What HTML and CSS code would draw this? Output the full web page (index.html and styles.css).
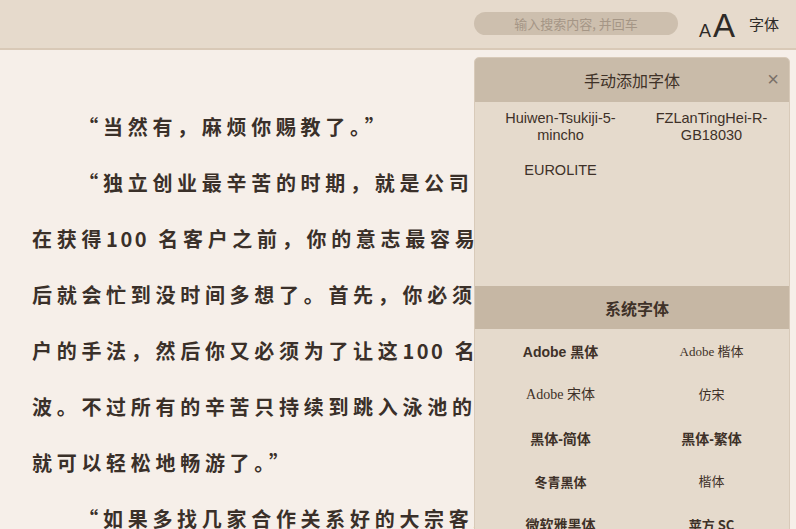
FILE: index.html
```html
<!DOCTYPE html>
<html lang="zh-CN">
<head>
  <meta charset="UTF-8">
  <meta name="viewport" content="width=device-width, initial-scale=1.0">
  <title>阅读</title>
  <link rel="stylesheet" href="styles.css">
</head>
<body>
  <!-- 顶部工具栏 -->
  <header class="toolbar">
    <input class="search" type="text" placeholder="输入搜索内容, 并回车">
    <div class="font-size"><span class="a-small">A</span><span class="a-big">A</span></div>
    <div class="font-btn">字体</div>
  </header>

  <!-- 正文 -->
  <main class="reader">
    <p>“当然有，麻烦你赐教了。”</p>
    <p>“独立创业最辛苦的时期，就是公司刚成立还没上轨道的阶段，在获得<span class="num">100</span> 名客户之前，你的意志最容易动摇。只要熬过这阶段，之后就会忙到没时间多想了。首先，你必须学会如何找到并说服大宗客户的手法，然后你又必须为了让这<span class="num">100</span> 名客户都满意而四处拼命地奔波。不过所有的辛苦只持续到跳入泳池的那一刻为止，在那之后，你就可以轻松地畅游了。”</p>
    <p>“如果多找几家合作关系好的大宗客户来往，是不是就会轻松一点？”</p>
  </main>

  <!-- 字体面板 -->
  <aside class="font-panel">
    <div class="panel-head">
      <span>手动添加字体</span>
      <span class="close">×</span>
    </div>
    <div class="custom-fonts">
      <div class="font-item">Huiwen-Tsukiji-5-mincho</div>
      <div class="font-item">FZLanTingHei-R-GB18030</div>
      <div class="font-item">EUROLITE</div>
    </div>
    <div class="section-head">系统字体</div>
    <div class="system-fonts">
      <div class="font-item f-bold">Adobe 黑体</div>
      <div class="font-item f-kai">Adobe 楷体</div>
      <div class="font-item f-song">Adobe 宋体</div>
      <div class="font-item f-kai">仿宋</div>
      <div class="font-item f-bold">黑体-简体</div>
      <div class="font-item f-bold">黑体-繁体</div>
      <div class="font-item f-mid">冬青黑体</div>
      <div class="font-item f-kai">楷体</div>
      <div class="font-item f-bold">微软雅黑体</div>
      <div class="font-item f-mid">苹方 SC</div>
    </div>
  </aside>
</body>
</html>
```

FILE: styles.css
```css
body {
  margin: 0;
  padding: 0;
  height: 529px;
  overflow: hidden;
  background-color: #F6EFE9; /* 正文米白底色 */
  color: #3A3029;
  font-family: "Noto Sans CJK SC", "Noto Sans", sans-serif;
  position: relative;
}

.toolbar {
  height: 48px;
  background-color: #E6DACC;
  border-bottom: 2px solid #D9C9B7;
  display: flex;
  align-items: center;
  justify-content: flex-end;
  padding-right: 17px;
}
.search {
  width: 204px;
  height: 23px;
  box-sizing: border-box;
  border: none;
  border-radius: 12px;
  background-color: #CDBFAE;
  font-family: "Noto Sans CJK SC", sans-serif;
  font-size: 13px;
  text-align: center;
  outline: none;
  margin-bottom: 1px;
}
.search::placeholder {
  color: #A59686;
}
.font-size {
  display: flex;
  align-items: baseline;
  margin-left: 21px;
  color: #2E2A27;
  font-family: "Liberation Sans", Arial, sans-serif;
  line-height: 1;
  margin-top: 2px;
}
.a-small {
  font-size: 18px;
}
.a-big {
  font-size: 33px;
  margin-left: 2px;
}
.font-btn {
  margin-left: 14px;
  font-size: 15px;
  color: #2E2A27;
  margin-bottom: 1px;
}

/* 正文 */
.reader {
  padding: 49px 0 0 32px;
  width: 748px;
  font-size: 20px;
  font-weight: 700;
  letter-spacing: 4.7px;
  line-height: 56px;
}
.reader p {
  margin: 0;
  text-indent: 46.3px;
}
.num {
  letter-spacing: 2.5px;
}

/* 字体面板 */
.font-panel {
  position: absolute;
  left: 474px;
  top: 57px;
  width: 316px;
  height: 490px;
  box-sizing: border-box;
  background-color: #E5DACC;
  border: 1px solid #D8CAB9;
  border-radius: 5px 5px 0 0;
  overflow: hidden;
}
.panel-head {
  height: 44px;
  background-color: #C9BBA9;
  display: flex;
  align-items: center;
  justify-content: center;
  position: relative;
  font-size: 16px;
  color: #3F3228;
}
.close {
  position: absolute;
  right: 10px;
  top: 11px;
  font-family: "Liberation Sans", Arial, sans-serif;
  font-size: 20px;
  line-height: 20px;
  color: #7A7068;
}
.custom-fonts {
  height: 184px;
  padding: 8px 8px 0 10px;
  box-sizing: border-box;
  display: grid;
  grid-template-columns: 151px 151px;
  grid-auto-rows: min-content;
  row-gap: 18px;
  font-family: "Liberation Sans", Arial, sans-serif;
  font-size: 14.5px;
  line-height: 17px;
  color: #3E3128;
}
.section-head {
  height: 43px;
  background-color: #C6B7A4;
  display: flex;
  align-items: center;
  justify-content: center;
  font-size: 16px;
  font-weight: 700;
  color: #3F3228;
  padding-left: 10px;
}
.system-fonts {
  padding: 13px 8px 0 10px;
  display: grid;
  grid-template-columns: 151px 151px;
  grid-auto-rows: 43.3px;
  font-size: 14px;
  line-height: 20px;
  color: #3E3128;
}
.font-item {
  text-align: center;
}
.f-bold {
  font-family: "Liberation Sans", "Noto Sans CJK SC", sans-serif;
  font-weight: 700;
}
.f-mid {
  font-weight: 700;
  font-size: 13px;
}
.f-kai {
  font-family: "Liberation Serif", "Noto Sans CJK TC", serif;
  font-size: 13px;
}
.f-song {
  font-family: "Liberation Serif", "Noto Sans CJK SC", serif;
  font-size: 14px;
}
```
